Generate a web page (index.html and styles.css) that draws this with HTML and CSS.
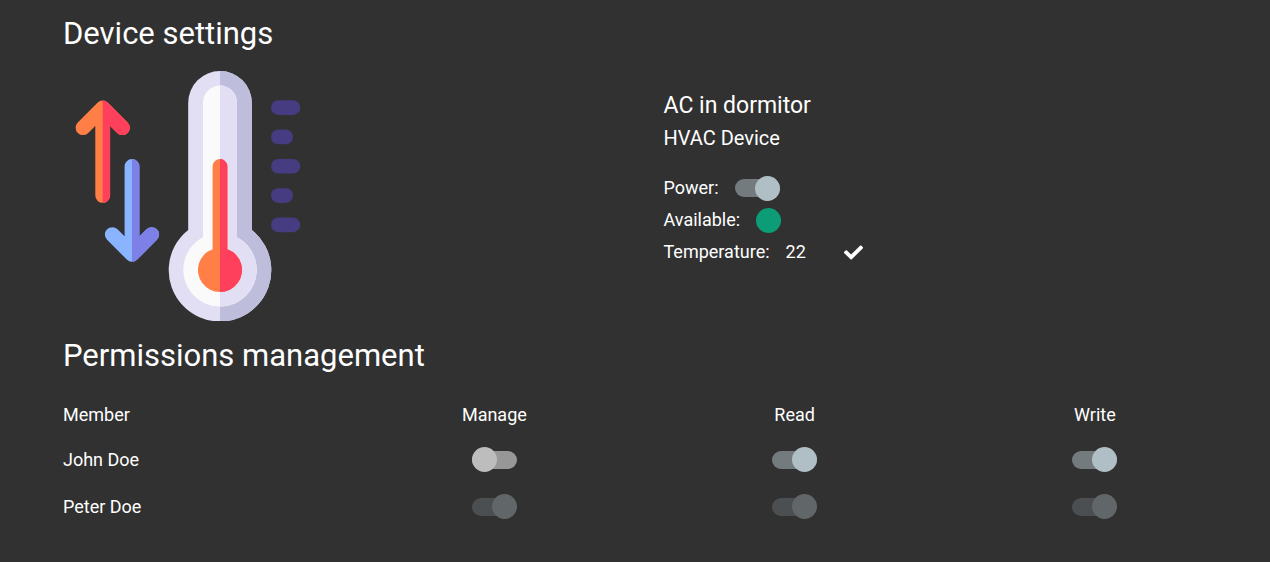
FILE: index.html
```html
<!DOCTYPE html>
<html lang="en">
<head>
<meta charset="utf-8">
<meta name="viewport" content="width=device-width, initial-scale=1">
<title>Device settings</title>
<link rel="stylesheet" href="styles.css">
</head>
<body>
<main class="page">
  <h1 class="heading">Device settings</h1>
  <section class="device">
    <div>
      <svg class="device-picture" viewBox="0 0 250 250" role="img" aria-label="Thermometer">
        <defs>
          <clipPath id="therm-right"><rect x="157" y="0" width="93" height="250"/></clipPath>
          <clipPath id="up-right"><rect x="39.7" y="20" width="40" height="130"/></clipPath>
          <clipPath id="down-right"><rect x="69" y="80" width="40" height="130"/></clipPath>
          <path id="shell" d="M125.200 158.900V31.800a31.800 31.800 0 0 1 63.600 0V158.900A51.300 51.300 0 1 1 125.200 158.900Z"/>
          <path id="glass" d="M140 166.300V31.600a17 17 0 0 1 34 0V166.300A36.700 36.700 0 1 1 140 166.300Z"/>
          <path id="mercury" d="M149.600 178.300V95.400a7.400 7.400 0 0 1 14.800 0V178.300A22 22 0 1 1 149.600 178.300Z"/>
          <path id="up" d="M39.700 124.400V37M20 56.700L39.700 37L59.400 56.700"/>
          <path id="down" d="M69 95.400V183.300M49.300 163.600L69 183.300L88.700 163.600"/>
        </defs>
        <use href="#shell" fill="#e2dff4"/>
        <use href="#shell" fill="#bebddc" clip-path="url(#therm-right)"/>
        <use href="#glass" fill="#fafafa"/>
        <use href="#glass" fill="#e2dff4" clip-path="url(#therm-right)"/>
        <use href="#mercury" fill="#ff7f47"/>
        <use href="#mercury" fill="#ff405c" clip-path="url(#therm-right)"/>
        <g fill="none" stroke-width="14.800" stroke-linecap="round" stroke-linejoin="round">
          <use href="#up" stroke="#ff7f47"/>
          <use href="#up" stroke="#ff405c" clip-path="url(#up-right)"/>
          <use href="#down" stroke="#8ab4ff"/>
          <use href="#down" stroke="#7d80e6" clip-path="url(#down-right)"/>
        </g>
        <g fill="#463c82">
          <rect x="208" y="29.300" width="29.300" height="14.700" rx="7.350"/>
          <rect x="208" y="58.600" width="22" height="14.700" rx="7.350"/>
          <rect x="208" y="87.900" width="29.300" height="14.700" rx="7.350"/>
          <rect x="208" y="117.200" width="22" height="14.700" rx="7.350"/>
          <rect x="208" y="146.500" width="29.300" height="14.700" rx="7.350"/>
        </g>
      </svg>
    </div>
    <div class="details">
      <h2 class="device-name">AC in dormitor</h2>
      <p class="device-type">HVAC Device</p>
      <div class="field">
        <label for="power">Power:</label>
        <input class="switch" id="power" type="checkbox" role="switch" checked>
      </div>
      <div class="field">
        <span>Available:</span>
        <span class="status" role="img" aria-label="Yes"></span>
      </div>
      <div class="field">
        <label for="temperature">Temperature:</label>
        <input class="number" id="temperature" type="text" inputmode="numeric" value="22">
        <button class="confirm" type="button" aria-label="Save temperature">
          <svg class="check" viewBox="0 0 512 512" aria-hidden="true"><path fill="currentColor" d="M173.898 439.404l-166.400-166.400c-9.997-9.997-9.997-26.206 0-36.204l36.203-36.204c9.997-9.998 26.207-9.998 36.204 0L192 312.690 432.095 72.596c9.997-9.997 26.207-9.997 36.204 0l36.203 36.204c9.997 9.997 9.997 26.206 0 36.204l-294.400 294.401c-9.998 9.997-26.207 9.997-36.204-.001z"/></svg>
        </button>
      </div>
    </div>
  </section>
  <h1 class="heading" id="permissions">Permissions management</h1>
  <table class="permissions" aria-labelledby="permissions">
    <thead>
      <tr><th scope="col">Member</th><th scope="col">Manage</th><th scope="col">Read</th><th scope="col">Write</th></tr>
    </thead>
    <tbody>
      <tr>
        <th scope="row">John Doe</th>
        <td><input class="switch" type="checkbox" role="switch" aria-label="John Doe: manage"></td>
        <td><input class="switch" type="checkbox" role="switch" aria-label="John Doe: read" checked></td>
        <td><input class="switch" type="checkbox" role="switch" aria-label="John Doe: write" checked></td>
      </tr>
      <tr>
        <th scope="row">Peter Doe</th>
        <td><input class="switch" type="checkbox" role="switch" aria-label="Peter Doe: manage" checked disabled></td>
        <td><input class="switch" type="checkbox" role="switch" aria-label="Peter Doe: read" checked disabled></td>
        <td><input class="switch" type="checkbox" role="switch" aria-label="Peter Doe: write" checked disabled></td>
      </tr>
    </tbody>
  </table>
</main>
</body>
</html>
```
FILE: styles.css
```css
* {
  box-sizing: border-box;
}

body {
  margin: 0;
  background: #313131;
  color: #fff;
  font: 18px/32px Roboto, sans-serif;
}

.page {
  padding: 14px 6px 32px 63px;
}

.heading {
  margin: 0;
  font-size: 31px;
  font-weight: 400;
  line-height: 40px;
}

.device {
  display: grid;
  grid-template-columns: 1fr 1fr;
  margin: 17px 0 15px;
}

.device-picture {
  display: block;
  width: 250px;
  height: 250px;
}

.details {
  padding-top: 19px;
}

.device-name {
  margin: 0;
  font-size: 23px;
  font-weight: 400;
}

.device-type {
  margin: 0 0 18px;
  font-size: 20px;
}

.field {
  display: flex;
  align-items: center;
  gap: 16px;
  height: 32px;
}

.switch {
  appearance: none;
  display: grid;
  flex: none;
  align-items: center;
  width: 45px;
  height: 25px;
  margin: 0;
  cursor: pointer;
}

.switch::before,
.switch::after {
  content: "";
  grid-area: 1 / 1;
}

.switch::before {
  height: 18px;
  border-radius: 9px;
  background: #979797;
}

.switch::after {
  width: 25px;
  height: 25px;
  border-radius: 50%;
  background: #bdbdbd;
}

.switch:checked::before {
  background: #747b7f;
}

.switch:checked::after {
  justify-self: end;
  background: #b0bec5;
}

.switch:disabled {
  cursor: default;
}

.switch:disabled::before {
  background: #4b4f51;
}

.switch:disabled::after {
  background: #616668;
}

.status {
  width: 25px;
  height: 25px;
  border-radius: 50%;
  background: #0d9d76;
}

.number {
  width: 42px;
  height: 32px;
  padding: 0;
  border: 0;
  background: transparent;
  color: inherit;
  font: inherit;
}

.confirm {
  display: flex;
  padding: 0;
  border: 0;
  background: transparent;
  color: inherit;
  cursor: pointer;
}

.check {
  width: 19px;
  height: 19px;
}

.permissions {
  width: 100%;
  margin-top: 18px;
  border-collapse: collapse;
  table-layout: fixed;
}

.permissions th,
.permissions td {
  height: 47px;
  padding: 0 38px 0 0;
  font-weight: 400;
}

.permissions thead th {
  height: 42px;
}

.permissions th:first-child {
  text-align: left;
}

.permissions .switch {
  margin: 0 auto;
}
```
